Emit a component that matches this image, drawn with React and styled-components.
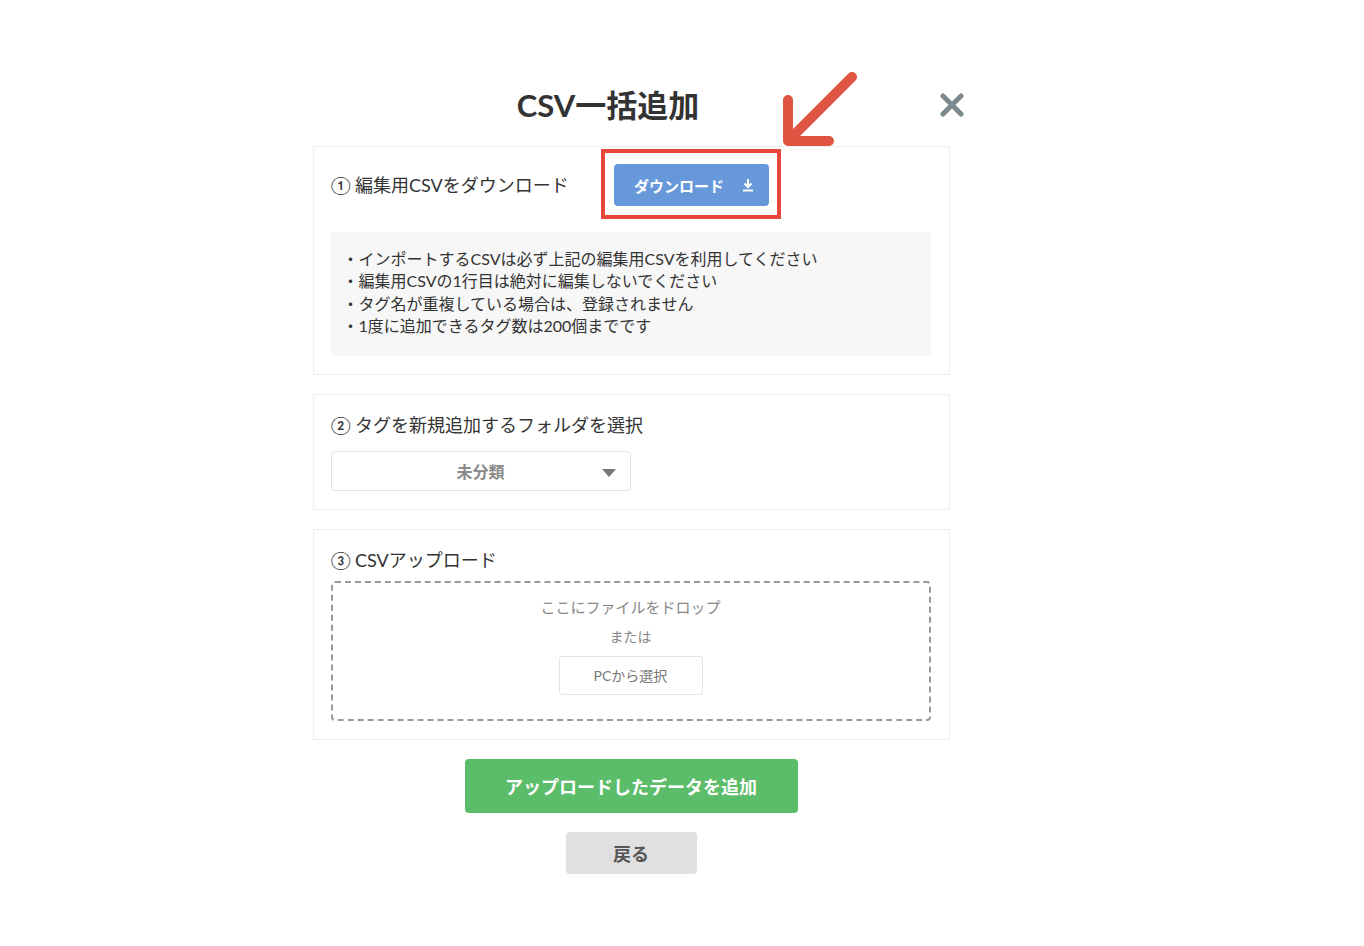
import React from 'react';
import styled, { createGlobalStyle } from 'styled-components';

const GlobalStyle = createGlobalStyle`
  html, body {
    margin: 0;
    padding: 0;
    background: #fff;
  }
  body {
    font-family: Lato, "Noto Sans CJK JP", sans-serif;
    color: #333;
  }
`;

const Page = styled.div`
  display: flex;
  justify-content: center;
  padding: 84px 102px 40px 0;
`;

const Column = styled.div`
  width: 637px;
  display: flex;
  flex-direction: column;
  align-items: center;
`;

const Header = styled.div`
  position: relative;
  width: 100%;
  height: 42px;
  margin-bottom: 20px;
`;

const Title = styled.h1`
  margin: 0;
  padding-right: 46px;
  text-align: center;
  font-size: 31px;
  line-height: 42px;
  font-weight: 700;
  color: #333;
`;

const Close = styled.button`
  position: absolute;
  right: -14px;
  top: 9px;
  width: 24px;
  height: 24px;
  padding: 0;
  border: none;
  background: none;
`;

const Card = styled.section`
  width: 100%;
  box-sizing: border-box;
  border: 1px solid #eee;
  padding: 17px 18px 18px 17px;
  margin-bottom: 19px;
`;

const Heading = styled.h2`
  margin: 0 0 ${(p) => p.$gap || 13}px;
  font-size: 18px;
  line-height: 26px;
  font-weight: 400;
  color: #333;
`;

const TopRow = styled.div`
  display: grid;
  grid-template-columns: 283px auto;
  align-items: center;
  height: 42px;
  margin-bottom: 26px;

  ${Heading} {
    margin: 0;
  }
`;

const Marked = styled.div`
  position: relative;
  width: 155px;

  &::after {
    content: '';
    position: absolute;
    left: -13px;
    right: -12px;
    top: -15px;
    bottom: -13px;
    border: 4px solid #e8463d;
  }
`;

const Arrow = styled.svg`
  position: absolute;
  left: 166px;
  top: -99px;
  overflow: visible;
`;

const BlueButton = styled.button`
  width: 155px;
  height: 42px;
  border: none;
  border-radius: 4px;
  background: #6799da;
  color: #fff;
  font-family: inherit;
  font-size: 15px;
  font-weight: 700;
  display: flex;
  align-items: center;
  justify-content: center;
  gap: 18px;
  padding: 0 0 0 6px;
`;

const Notes = styled.ul`
  list-style: none;
  margin: 0;
  padding: 16px 12px 18px;
  background: #f7f7f7;
  font-size: 16px;
  line-height: 22.4px;
  color: #333;
`;

const Select = styled.div`
  position: relative;
  width: 300px;
  height: 40px;
  box-sizing: border-box;
  border: 1px solid #e2e2e2;
  border-radius: 4px;
  display: flex;
  align-items: center;
  justify-content: center;
  font-size: 16px;
  font-weight: 700;
  color: #888;
`;

const Caret = styled.span`
  position: absolute;
  right: 14px;
  top: 17px;
  width: 0;
  height: 0;
  border-left: 7px solid transparent;
  border-right: 7px solid transparent;
  border-top: 8px solid #777;
`;

const Dropzone = styled.div`
  border: 2px dashed #999;
  border-radius: 4px;
  padding: 13px 0 24px;
  display: flex;
  flex-direction: column;
  align-items: center;
  color: #888;
`;

const DropText = styled.p`
  margin: 0 0 8px;
  font-size: ${(p) => p.$size}px;
  line-height: 22px;
`;

const OutlineButton = styled.button`
  width: 144px;
  height: 39px;
  border: 1px solid #e4e4e4;
  border-radius: 3px;
  background: #fff;
  font-family: inherit;
  font-size: 14px;
  color: #777;
`;

const ActionButton = styled.button`
  width: ${(p) => p.$w}px;
  height: ${(p) => p.$h}px;
  border: none;
  border-radius: 4px;
  background: ${(p) => p.$bg};
  color: ${(p) => p.$fg};
  font-family: inherit;
  font-size: 18px;
  font-weight: 700;
  margin-bottom: 19px;
`;

const notes = [
  '・インポートするCSVは必ず上記の編集用CSVを利用してください',
  '・編集用CSVの1行目は絶対に編集しないでください',
  '・タグ名が重複している場合は、登録されません',
  '・1度に追加できるタグ数は200個までです',
];

const App = () => {
  return (
    <>
      <GlobalStyle />
      <Page>
        <Column>
          <Header>
            <Title>CSV一括追加</Title>
            <Close aria-label="close">
              <svg width="24" height="24" viewBox="0 0 24 24">
                <path d="M3 3L21 21M21 3L3 21" stroke="#7b8a8e" strokeWidth="5" strokeLinecap="round" />
              </svg>
            </Close>
          </Header>

          <Card>
            <TopRow>
              <Heading>① 編集用CSVをダウンロード</Heading>
              <Marked>
                <BlueButton>
                  ダウンロード
                  <svg width="12" height="14" viewBox="0 0 12 14">
                    <path d="M6 1V9M2.5 5.5L6 9L9.5 5.5M1 12.5H11" stroke="#fff" strokeWidth="2" fill="none" />
                  </svg>
                </BlueButton>
                <Arrow width="80" height="80" viewBox="0 0 80 80">
                  <path
                    d="M8 76L72 12M8 35V76H49"
                    stroke="#e05542"
                    strokeWidth="10"
                    strokeLinecap="round"
                    strokeLinejoin="round"
                    fill="none"
                  />
                </Arrow>
              </Marked>
            </TopRow>
            <Notes>
              {notes.map((n) => (
                <li key={n}>{n}</li>
              ))}
            </Notes>
          </Card>

          <Card>
            <Heading>② タグを新規追加するフォルダを選択</Heading>
            <Select>
              未分類
              <Caret />
            </Select>
          </Card>

          <Card>
            <Heading $gap={8}>③ CSVアップロード</Heading>
            <Dropzone>
              <DropText $size={15}>ここにファイルをドロップ</DropText>
              <DropText $size={14}>または</DropText>
              <OutlineButton>PCから選択</OutlineButton>
            </Dropzone>
          </Card>

          <ActionButton $w={333} $h={54} $bg="#5bbc69" $fg="#fff">
            アップロードしたデータを追加
          </ActionButton>
          <ActionButton $w={131} $h={42} $bg="#e0e0e0" $fg="#555">
            戻る
          </ActionButton>
        </Column>
      </Page>
    </>
  );
};

export default App;
